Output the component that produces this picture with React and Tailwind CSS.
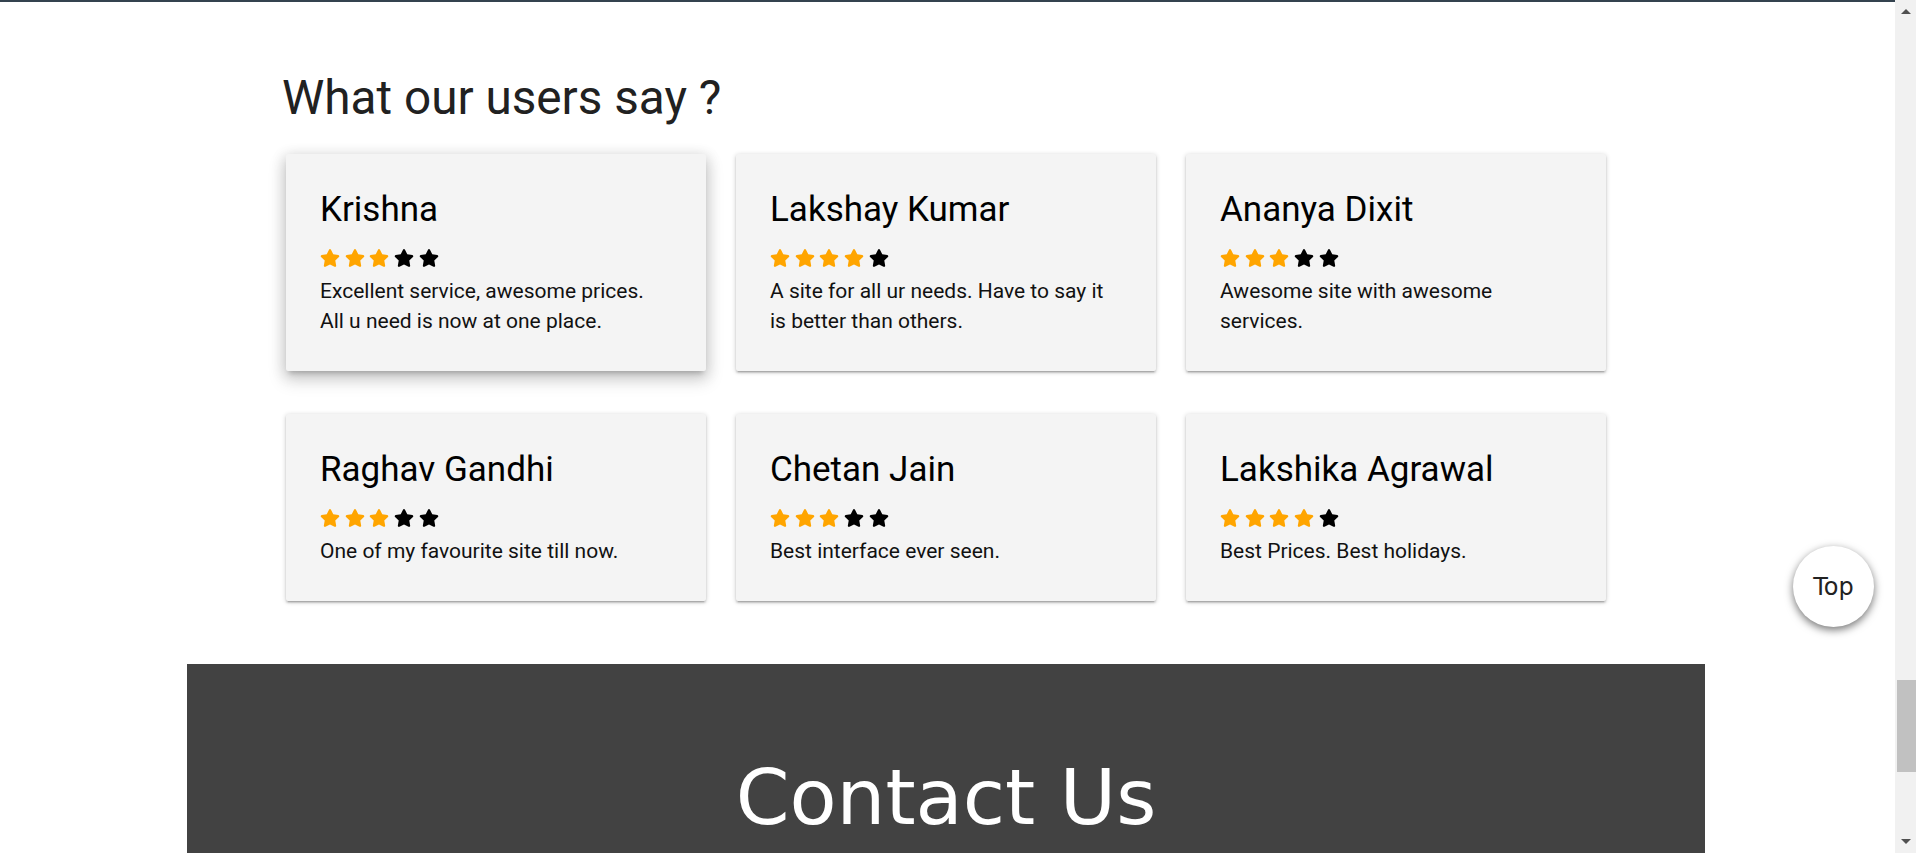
import React from 'react';
import { FaStar } from 'react-icons/fa';

// avis des utilisateurs, affichés en grille de 3
const reviews = [
  { name: 'Krishna', rating: 3, text: 'Excellent service, awesome prices. All u need is now at one place.', hovered: true },
  { name: 'Lakshay Kumar', rating: 4, text: 'A site for all ur needs. Have to say it is better than others.' },
  { name: 'Ananya Dixit', rating: 3, text: 'Awesome site with awesome services.' },
  { name: 'Raghav Gandhi', rating: 3, text: 'One of my favourite site till now.' },
  { name: 'Chetan Jain', rating: 3, text: 'Best interface ever seen.' },
  { name: 'Lakshika Agrawal', rating: 4, text: 'Best Prices. Best holidays.' },
];

function Stars({ rating }) {
  return (
    <div className="mt-[18px] flex h-[19px] items-center gap-[4.7px]">
      {[0, 1, 2, 3, 4].map(i => (
        <FaStar key={i} className={i < rating ? 'h-[18px] w-[20px] text-[#ffa500]' : 'h-[18px] w-[20px] text-black'} />
      ))}
    </div>
  );
}

function ReviewCard({ review }) {
  const shadow = review.hovered
    ? 'shadow-[0_8px_17px_2px_rgba(0,0,0,0.14),0_3px_14px_2px_rgba(0,0,0,0.12),0_5px_5px_-3px_rgba(0,0,0,0.2)]'
    : 'shadow-[0_2px_2px_0_rgba(0,0,0,0.14),0_3px_1px_-2px_rgba(0,0,0,0.12),0_1px_5px_0_rgba(0,0,0,0.2)]';
  return (
    <div className={'rounded-[2px] bg-[#f4f4f4] px-[34px] pt-[36px] pb-[35px] ' + shadow}>
      <h4 className="text-[35px] leading-[40px] text-black">{review.name}</h4>
      <Stars rating={review.rating} />
      <p className="mt-[9px] max-w-[340px] text-[21px] leading-[30px] text-[#111]">{review.text}</p>
    </div>
  );
}

export default function App() {
  return (
    <div className="relative flex h-[853px] w-full overflow-hidden bg-white font-['Roboto',sans-serif]">
      <main className="min-w-0 flex-1">
        <div className="h-[2px] bg-[#34434f]" />

        <section className="mx-auto w-[1323px] pt-[70px]">
          <h3 className="-ml-[4px] text-[47.7px] leading-[1.1] text-[#212121]">What our users say ?</h3>
          <div className="mt-[30px] grid grid-cols-[420px_420px_420px] gap-x-[30px] gap-y-[43px]">
            {reviews.map(r => (
              <ReviewCard key={r.name} review={r} />
            ))}
          </div>
        </section>

        <section className="mt-[63px] ml-[187px] w-[1518px] bg-[#424242] pt-[95px] pb-[80px] text-center">
          <h2 className="font-['DejaVu_Sans',sans-serif] text-[77px] leading-none text-white">Contact Us</h2>
        </section>
      </main>

      {/* fausse barre de défilement */}
      <div className="flex w-[21px] shrink-0 flex-col bg-[#f1f1f1]">
        <div className="mt-[9px] ml-[6px] h-0 w-0 border-x-[5.5px] border-b-[5px] border-x-transparent border-b-[#505050]" />
        <div className="mt-[666px] ml-[2px] h-[92px] bg-[#c1c1c1]" />
        <div className="mt-[67px] ml-[6px] h-0 w-0 border-x-[5.5px] border-t-[5px] border-x-transparent border-t-[#505050]" />
      </div>

      <button className="absolute top-[546px] right-[42px] flex h-[81px] w-[81px] items-center justify-center rounded-full bg-white font-['DejaVu_Sans',sans-serif] text-[24px] text-[#222] shadow-[0_3px_8px_rgba(0,0,0,0.55)]">
        Top
      </button>
    </div>
  );
}
